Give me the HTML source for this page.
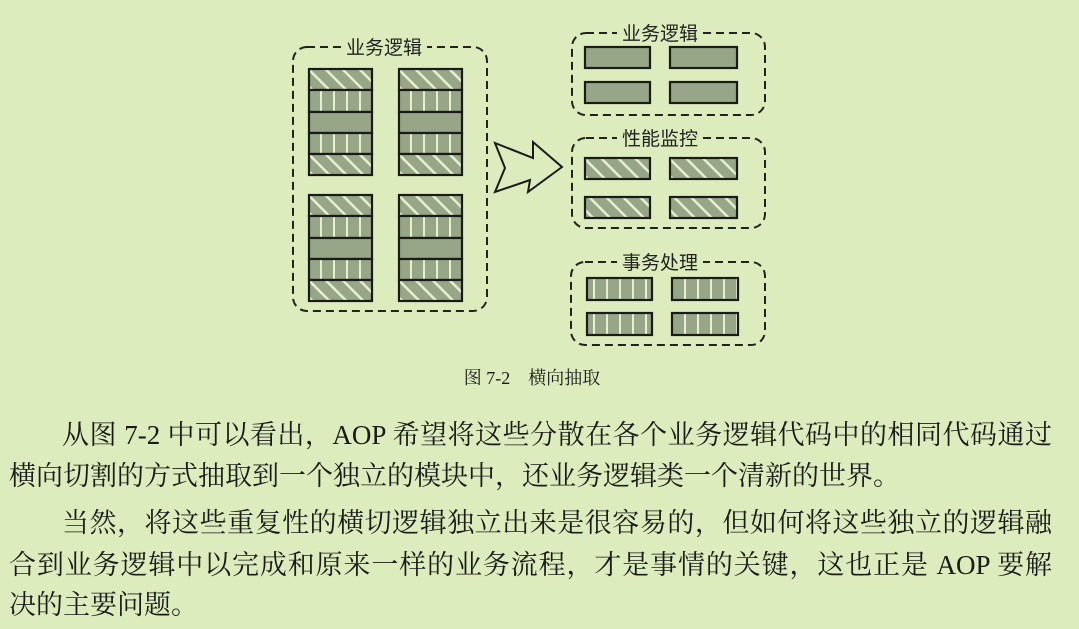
<!DOCTYPE html>
<html><head><meta charset="utf-8"><style>
body{margin:0;width:1079px;height:629px;background:#dcecbc;overflow:hidden;position:relative;font-family:"Liberation Serif","Noto Serif CJK SC",serif;color:#1a1a1a}
.l{position:absolute;font-size:27px;white-space:nowrap;line-height:30px}
.j{text-align:justify;text-align-last:justify;white-space:normal}
</style></head><body>
<svg width="1079" height="400" style="position:absolute;left:0;top:0">
<defs>
<pattern id="d" width="12" height="12" patternUnits="userSpaceOnUse" patternTransform="rotate(-45)">
<rect width="12" height="12" fill="#96a686"/><rect width="2.5" height="12" fill="#e6efcf"/></pattern>
<pattern id="v" width="13" height="10" patternUnits="userSpaceOnUse" x="8">
<rect width="13" height="10" fill="#96a686"/><rect width="2" height="10" fill="#e6efcf"/></pattern>
</defs>
<g fill="none" stroke="#222" stroke-width="2" stroke-dasharray="8,5">
<rect x="293" y="47" width="194" height="264" rx="14"/>
<rect x="572" y="33" width="193" height="82" rx="14"/>
<rect x="572" y="138" width="193" height="90" rx="14"/>
<rect x="571" y="262" width="194" height="83" rx="14"/>
</g>
<g font-family="Liberation Sans,Noto Sans CJK SC,sans-serif" font-size="19" text-anchor="middle" fill="#222">
<rect x="341" y="36" width="86" height="22" fill="#dcecbc"/><text x="384" y="54">业务逻辑</text>
<rect x="617" y="22" width="86" height="22" fill="#dcecbc"/><text x="660" y="40">业务逻辑</text>
<rect x="617" y="127" width="86" height="22" fill="#dcecbc"/><text x="660" y="145">性能监控</text>
<rect x="617" y="251" width="86" height="22" fill="#dcecbc"/><text x="660" y="269">事务处理</text>
</g>
<g stroke="#1a1a1a" stroke-width="2.2">
<g id="st">
<rect x="309" y="69" width="63" height="21" fill="url(#d)"/>
<rect x="309" y="90" width="63" height="22" fill="url(#v)"/>
<rect x="309" y="112" width="63" height="21" fill="#96a686"/>
<rect x="309" y="133" width="63" height="21" fill="url(#v)"/>
<rect x="309" y="154" width="63" height="21" fill="url(#d)"/>
</g>
<use href="#st" x="90"/><use href="#st" y="126"/><use href="#st" x="90" y="126"/>
<rect x="585" y="47" width="65" height="21" fill="#96a686"/>
<rect x="670" y="47" width="67" height="21" fill="#96a686"/>
<rect x="585" y="82" width="65" height="21" fill="#96a686"/>
<rect x="670" y="82" width="67" height="21" fill="#96a686"/>
<rect x="585" y="158" width="65" height="21" fill="url(#d)"/>
<rect x="670" y="158" width="67" height="21" fill="url(#d)"/>
<rect x="585" y="197" width="65" height="21" fill="url(#d)"/>
<rect x="670" y="197" width="67" height="21" fill="url(#d)"/>
<rect x="587" y="278" width="65" height="22" fill="url(#v)"/>
<rect x="672" y="278" width="66" height="22" fill="url(#v)"/>
<rect x="587" y="313" width="65" height="22" fill="url(#v)"/>
<rect x="672" y="313" width="66" height="22" fill="url(#v)"/>
</g>
<polygon points="495,143 533,158 533,142 562,167 528,192 530,180 495,192 505,168" fill="#dcecbc" stroke="#1a1a1a" stroke-width="2"/>
<text x="532" y="384" font-size="18" text-anchor="middle" fill="#1a1a1a" font-family="Liberation Serif,Noto Serif CJK SC,serif">图 7-2　横向抽取</text>
</svg>
<div class="l j" style="left:62px;top:420px;width:990px">从图 7-2 中可以看出，AOP 希望将这些分散在各个业务逻辑代码中的相同代码通过</div>
<div class="l" style="left:9px;top:461px">横向切割的方式抽取到一个独立的模块中，还业务逻辑类一个清新的世界。</div>
<div class="l j" style="left:62px;top:508px;width:990px">当然，将这些重复性的横切逻辑独立出来是很容易的，但如何将这些独立的逻辑融</div>
<div class="l j" style="left:9px;top:550px;width:1043px">合到业务逻辑中以完成和原来一样的业务流程，才是事情的关键，这也正是 AOP 要解</div>
<div class="l" style="left:9px;top:590px">决的主要问题。</div>
</body></html>
